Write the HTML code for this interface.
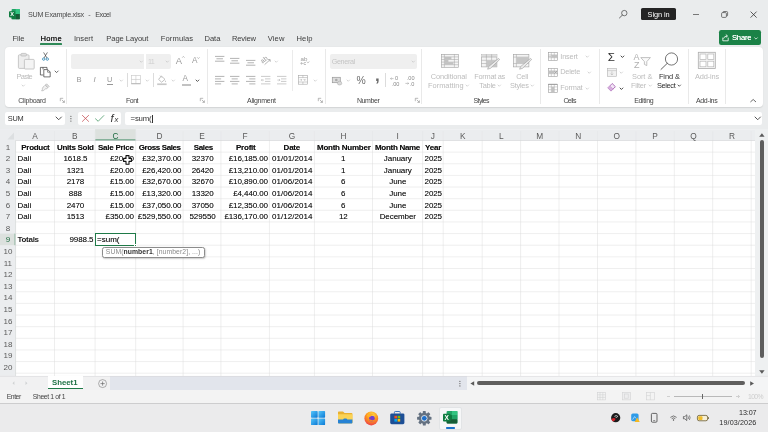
<!DOCTYPE html>
<html><head><meta charset="utf-8"><title>SUM Example.xlsx - Excel</title>
<style>
html,body{margin:0;padding:0;}
body{width:768px;height:432px;overflow:hidden;position:relative;background:#eaeced;font-family:"Liberation Sans",sans-serif;}
.t{position:absolute;white-space:nowrap;}
.c{text-shadow:0 0 0.5px rgba(0,0,0,0.45);}
#w{position:absolute;left:0;top:0;width:768px;height:432px;will-change:transform;}
.b{position:absolute;box-sizing:border-box;}
svg{overflow:visible;}
</style></head><body><div id="w">
<svg class="b" style="left:9.00px;top:9.20px;" width="11" height="10.4" viewBox="0 0 11 10.4">
<rect x="2.6" y="0" width="8.2" height="10.2" rx="0.9" fill="#21a366"/>
<rect x="6.7" y="0" width="4.1" height="5.1" fill="#33c481"/>
<rect x="2.6" y="5.1" width="4.1" height="5.1" fill="#107c41"/>
<rect x="6.7" y="5.1" width="4.1" height="5.1" rx="0.5" fill="#185c37"/>
<rect x="0" y="2.2" width="6.2" height="6.2" rx="0.8" fill="#107c41"/>
<text x="3.1" y="7.3" font-size="5.6" font-weight="bold" fill="#fff" text-anchor="middle" font-family="Liberation Sans, sans-serif">X</text>
</svg>
<span class="t" style="left:28.00px;top:10.32px;font-size:7.2px;line-height:9.36px;color:#4a4a4a;letter-spacing:-0.276px;">SUM Example.xlsx</span>
<span class="t" style="left:88.30px;top:10.32px;font-size:7.2px;line-height:9.36px;color:#555;">-</span>
<span class="t" style="left:95.30px;top:10.32px;font-size:7.2px;line-height:9.36px;color:#444;letter-spacing:-0.521px;">Excel</span>
<svg class="b" style="left:618.00px;top:9.00px;" width="12" height="12" viewBox="0 0 12 12"><circle cx="6.3" cy="4.1" r="2.7" fill="none" stroke="#444" stroke-width="0.7"/><path d="M4.4 6.1 L1.5 8.9" stroke="#444" stroke-width="0.8" stroke-linecap="round"/></svg>
<div class="b" style="left:641.00px;top:8.30px;width:34.70px;height:11.90px;background:#242424;border-radius:1.6px;"></div>
<span class="t" style="left:647.60px;top:9.99px;font-size:7.4px;line-height:9.62px;color:#fff;letter-spacing:-0.104px;">Sign in</span>
<div class="b" style="left:693.00px;top:13.70px;width:6.30px;height:0.60px;background:#777;"></div>
<svg class="b" style="left:721.00px;top:11.00px;" width="8" height="8" viewBox="0 0 8 8"><rect x="0.6" y="1.6" width="4.8" height="4.8" rx="1" fill="none" stroke="#444" stroke-width="0.7"/><path d="M2 1.6 V1.3 Q2 0.5 2.8 0.5 H5.6 Q6.6 0.5 6.6 1.5 V4.2 Q6.6 5 5.8 5 H5.5" fill="none" stroke="#444" stroke-width="0.7"/></svg>
<svg class="b" style="left:750.00px;top:11.00px;" width="8" height="8" viewBox="0 0 8 8"><path d="M0.6 0.6 L6.6 6.6 M6.6 0.6 L0.6 6.6" stroke="#333" stroke-width="0.8" fill="none"/></svg>
<span class="t" style="left:12.50px;top:34.06px;font-size:7.6px;line-height:9.88px;color:#3c3c3c;letter-spacing:-0.062px;">File</span>
<span class="t" style="left:40.50px;top:34.06px;font-size:7.6px;line-height:9.88px;color:#1f1f1f;letter-spacing:0.307px;text-shadow:0 0 0.2px #1f1f1f;">Home</span>
<span class="t" style="left:74.00px;top:34.06px;font-size:7.6px;line-height:9.88px;color:#3c3c3c;letter-spacing:-0.001px;">Insert</span>
<span class="t" style="left:106.30px;top:34.06px;font-size:7.6px;line-height:9.88px;color:#3c3c3c;letter-spacing:-0.062px;">Page Layout</span>
<span class="t" style="left:160.80px;top:34.06px;font-size:7.6px;line-height:9.88px;color:#3c3c3c;letter-spacing:0.103px;">Formulas</span>
<span class="t" style="left:204.50px;top:34.06px;font-size:7.6px;line-height:9.88px;color:#3c3c3c;letter-spacing:-0.063px;">Data</span>
<span class="t" style="left:232.00px;top:34.06px;font-size:7.6px;line-height:9.88px;color:#3c3c3c;letter-spacing:-0.187px;">Review</span>
<span class="t" style="left:267.80px;top:34.06px;font-size:7.6px;line-height:9.88px;color:#3c3c3c;letter-spacing:0.091px;">View</span>
<span class="t" style="left:296.50px;top:34.06px;font-size:7.6px;line-height:9.88px;color:#3c3c3c;letter-spacing:0.092px;">Help</span>
<div class="b" style="left:40.20px;top:43.30px;width:22.20px;height:1.30px;background:#2f8a58;border-radius:0.6px;"></div>
<div class="b" style="left:718.80px;top:30.20px;width:42.20px;height:14.60px;background:#1b8247;border-radius:2.2px;"></div>
<svg class="b" style="left:722.00px;top:33.60px;" width="8" height="8" viewBox="0 0 8 8"><path d="M0.8 3.6 V6.8 H6.2 V3.6" fill="none" stroke="#fff" stroke-width="0.8"/><path d="M1.6 4.6 Q2.2 2 5 2 M3.8 0.6 L5.6 2 L3.8 3.5" fill="none" stroke="#fff" stroke-width="0.8"/></svg>
<span class="t" style="left:732.00px;top:32.96px;font-size:7.6px;line-height:9.88px;color:#fff;letter-spacing:-0.196px;text-shadow:0 0 0.4px #fff;">Share</span>
<svg class="b" style="left:754.30px;top:36.80px;" width="4" height="3" viewBox="0 0 4 3"><path d="M0.4 0.5 L2 2.1 L3.6 0.5" fill="none" stroke="#fff" stroke-width="0.7"/></svg>
<div class="b" style="left:4.60px;top:47.40px;width:758.40px;height:59.30px;background:#ffffff;border-radius:4px;box-shadow:0 0.5px 1.2px rgba(0,0,0,0.10);"></div>
<svg class="b" style="left:17.60px;top:53.00px;" width="17" height="17" viewBox="0 0 17 17">
<rect x="0.4" y="1.8" width="10.6" height="13.6" rx="1" fill="#eeeeee" stroke="#bcbcbc" stroke-width="0.8"/>
<rect x="3" y="0.4" width="5.4" height="2.6" rx="0.8" fill="#e0e0e0" stroke="#bcbcbc" stroke-width="0.8"/>
<rect x="6.4" y="6.4" width="9.8" height="9.6" rx="0.8" fill="#f4f4f4" stroke="#bcbcbc" stroke-width="0.8"/>
</svg>
<span class="t" style="left:16.50px;top:72.49px;font-size:7.4px;line-height:9.62px;color:#bcbcbc;letter-spacing:-0.685px;">Paste</span>
<svg class="b" style="left:22.42px;top:85.16px;" width="2.5600000000000005" height="1.2800000000000002" viewBox="0 0 2.5600000000000005 1.2800000000000002"><path d="M0 0 L1.28 1.28 L2.56 0" fill="none" stroke="#c4c4c4" stroke-width="0.7" stroke-linecap="round" stroke-linejoin="round"/></svg>
<svg class="b" style="left:42.00px;top:52.20px;" width="7" height="9" viewBox="0 0 7 9"><path d="M1.6 0.4 L5 6 M5.4 0.4 L2 6" stroke="#444" stroke-width="0.7" fill="none"/>
<circle cx="1.7" cy="7.1" r="1.2" fill="none" stroke="#2c84b3" stroke-width="0.8"/><circle cx="5.3" cy="7.1" r="1.2" fill="none" stroke="#2c84b3" stroke-width="0.8"/></svg>
<svg class="b" style="left:40.00px;top:67.00px;" width="11" height="10.4" viewBox="0 0 11 10.4"><path d="M3 2.4 V0.4 H7 V2.4" fill="none" stroke="#444" stroke-width="0.75"/><path d="M0.4 0.4 H3 M0.4 0.4 V8 H3.4" fill="none" stroke="#444" stroke-width="0.75"/>
<path d="M3.8 2.6 H7.8 L10.2 5 V9.9 H3.8 Z" fill="#fff" stroke="#444" stroke-width="0.75"/><path d="M7.6 2.8 V5.2 H10" fill="none" stroke="#444" stroke-width="0.6"/></svg>
<svg class="b" style="left:54.80px;top:71.40px;" width="3.2" height="1.6" viewBox="0 0 3.2 1.6"><path d="M0 0 L1.60 1.60 L3.20 0" fill="none" stroke="#444" stroke-width="0.8" stroke-linecap="round" stroke-linejoin="round"/></svg>
<svg class="b" style="left:41.00px;top:83.00px;" width="9" height="9" viewBox="0 0 9 9"><path d="M5.6 0.8 L8.2 3.4 L7 4.6 L4.4 2 Z" fill="#e2e2e2" stroke="#a9a9a9" stroke-width="0.6" stroke-linejoin="round"/><path d="M4.2 2.2 L6.8 4.8 L5.8 5.8 Q4.6 5.4 3.6 6.6 Q2.4 8.2 0.6 7.8 Q1.6 6.6 1.4 5.4 Q1.6 4 3.2 3.2 Z" fill="#f0f0f0" stroke="#a9a9a9" stroke-width="0.6" stroke-linejoin="round"/></svg>
<span class="t" style="left:18.30px;top:96.15px;font-size:7.0px;line-height:9.1px;color:#444;letter-spacing:-0.296px;">Clipboard</span>
<svg class="b" style="left:59.60px;top:98.20px;" width="5" height="5" viewBox="0 0 5 5"><path d="M0.3 3.2 V0.3 H3.2" fill="none" stroke="#8a8a8a" stroke-width="0.6"/><path d="M1.8 1.8 L4.3 4.3 M4.4 2.4 V4.4 H2.4" fill="none" stroke="#8a8a8a" stroke-width="0.6"/></svg>
<div class="b" style="left:66.20px;top:49.00px;width:0.60px;height:55.00px;background:#e9e9e9;"></div>
<div class="b" style="left:70.90px;top:54.00px;width:73.50px;height:14.50px;background:#efefef;border-radius:2px 0 0 2px;"></div>
<svg class="b" style="left:139.72px;top:60.76px;" width="2.5600000000000005" height="1.2800000000000002" viewBox="0 0 2.5600000000000005 1.2800000000000002"><path d="M0 0 L1.28 1.28 L2.56 0" fill="none" stroke="#c4c4c4" stroke-width="0.7" stroke-linecap="round" stroke-linejoin="round"/></svg>
<div class="b" style="left:145.60px;top:54.00px;width:25.20px;height:14.50px;background:#efefef;border-radius:0 2px 2px 0;"></div>
<span class="t" style="left:147.90px;top:56.62px;font-size:7.2px;line-height:9.36px;color:#cfcfcf;letter-spacing:-0.537px;">11</span>
<svg class="b" style="left:166.32px;top:60.76px;" width="2.5600000000000005" height="1.2800000000000002" viewBox="0 0 2.5600000000000005 1.2800000000000002"><path d="M0 0 L1.28 1.28 L2.56 0" fill="none" stroke="#c4c4c4" stroke-width="0.7" stroke-linecap="round" stroke-linejoin="round"/></svg>
<span class="t" style="left:175.70px;top:54.69px;font-size:9.4px;line-height:12.22px;color:#9a9a9a;">A</span>
<svg class="b" style="left:181.60px;top:56.40px;" width="3" height="2" viewBox="0 0 3 2"><path d="M0.2 1.7 L1.4 0.4 L2.6 1.7" fill="none" stroke="#9a9a9a" stroke-width="0.6"/></svg>
<span class="t" style="left:192.00px;top:56.07px;font-size:8.2px;line-height:10.66px;color:#9a9a9a;">A</span>
<svg class="b" style="left:197.40px;top:56.60px;" width="3" height="2" viewBox="0 0 3 2"><path d="M0.2 0.3 L1.4 1.6 L2.6 0.3" fill="none" stroke="#9a9a9a" stroke-width="0.6"/></svg>
<span class="t" style="left:76.60px;top:75.06px;font-size:7.6px;line-height:9.88px;color:#979797;">B</span>
<span class="t" style="left:93.60px;top:74.93px;font-size:7.8px;line-height:10.14px;color:#979797;font-style:italic;font-family:"Liberation Serif",serif;">I</span>
<span class="t" style="left:107.00px;top:74.99px;font-size:7.4px;line-height:9.62px;color:#979797;">U</span>
<div class="b" style="left:106.80px;top:83.70px;width:5.80px;height:0.70px;background:#979797;"></div>
<svg class="b" style="left:120.02px;top:79.76px;" width="2.5600000000000005" height="1.2800000000000002" viewBox="0 0 2.5600000000000005 1.2800000000000002"><path d="M0 0 L1.28 1.28 L2.56 0" fill="none" stroke="#c4c4c4" stroke-width="0.7" stroke-linecap="round" stroke-linejoin="round"/></svg>
<div class="b" style="left:127.20px;top:73.00px;width:0.60px;height:14.00px;background:#dcdcdc;"></div>
<svg class="b" style="left:131.00px;top:75.30px;" width="10" height="9.4" viewBox="0 0 10 9.4"><rect x="0.4" y="0.4" width="9" height="8.2" fill="none" stroke="#c6c6c6" stroke-width="0.6"/><path d="M4.9 0.4 V8.6 M0.4 4.5 H9.4" stroke="#c6c6c6" stroke-width="0.6"/><path d="M0.2 8.8 H9.6" stroke="#a9a9a9" stroke-width="0.8"/></svg>
<svg class="b" style="left:146.02px;top:79.76px;" width="2.5600000000000005" height="1.2800000000000002" viewBox="0 0 2.5600000000000005 1.2800000000000002"><path d="M0 0 L1.28 1.28 L2.56 0" fill="none" stroke="#c4c4c4" stroke-width="0.7" stroke-linecap="round" stroke-linejoin="round"/></svg>
<div class="b" style="left:153.20px;top:73.00px;width:0.60px;height:14.00px;background:#dcdcdc;"></div>
<svg class="b" style="left:157.00px;top:75.00px;" width="10" height="11" viewBox="0 0 10 11"><path d="M4.4 1 L8 4.4 L4.6 7.2 L1.6 4.4 Z" fill="none" stroke="#a8a8a8" stroke-width="0.7"/><path d="M3 0.6 L5 2.6" stroke="#a8a8a8" stroke-width="0.6"/><path d="M8.4 5.2 Q9.4 6.6 8.6 7.2 Q7.8 6.8 8.4 5.2" fill="#a8a8a8"/><rect x="0.2" y="8.4" width="9.4" height="1.7" fill="#c8c8c8"/></svg>
<svg class="b" style="left:171.72px;top:79.76px;" width="2.5600000000000005" height="1.2800000000000002" viewBox="0 0 2.5600000000000005 1.2800000000000002"><path d="M0 0 L1.28 1.28 L2.56 0" fill="none" stroke="#c4c4c4" stroke-width="0.7" stroke-linecap="round" stroke-linejoin="round"/></svg>
<span class="t" style="left:182.60px;top:73.87px;font-size:8.2px;line-height:10.66px;color:#9a9a9a;">A</span>
<div class="b" style="left:181.60px;top:83.50px;width:9.40px;height:2.00px;background:#c2c2c2;"></div>
<svg class="b" style="left:196.16px;top:79.68px;" width="2.8800000000000003" height="1.4400000000000002" viewBox="0 0 2.8800000000000003 1.4400000000000002"><path d="M0 0 L1.44 1.44 L2.88 0" fill="none" stroke="#444" stroke-width="0.9" stroke-linecap="round" stroke-linejoin="round"/></svg>
<span class="t" style="left:126.00px;top:96.15px;font-size:7.0px;line-height:9.1px;color:#444;letter-spacing:-0.502px;">Font</span>
<svg class="b" style="left:200.00px;top:98.20px;" width="5" height="5" viewBox="0 0 5 5"><path d="M0.3 3.2 V0.3 H3.2" fill="none" stroke="#8a8a8a" stroke-width="0.6"/><path d="M1.8 1.8 L4.3 4.3 M4.4 2.4 V4.4 H2.4" fill="none" stroke="#8a8a8a" stroke-width="0.6"/></svg>
<div class="b" style="left:206.90px;top:49.00px;width:0.60px;height:55.00px;background:#e9e9e9;"></div>
<svg class="b" style="left:214.60px;top:56.40px;" width="9.4" height="7.199999999999999" viewBox="0 0 9.4 7.199999999999999"><path d="M0.00 0.40 H9.40" stroke="#999" stroke-width="0.75"/><path d="M1.41 2.80 H7.99" stroke="#999" stroke-width="0.75"/><path d="M0.00 5.20 H9.40" stroke="#999" stroke-width="0.75"/></svg>
<svg class="b" style="left:230.00px;top:58.20px;" width="9.4" height="7.199999999999999" viewBox="0 0 9.4 7.199999999999999"><path d="M0.00 0.40 H9.40" stroke="#999" stroke-width="0.75"/><path d="M1.41 2.80 H7.99" stroke="#999" stroke-width="0.75"/><path d="M0.00 5.20 H9.40" stroke="#999" stroke-width="0.75"/></svg>
<svg class="b" style="left:245.80px;top:60.40px;" width="9.4" height="7.199999999999999" viewBox="0 0 9.4 7.199999999999999"><path d="M0.00 0.40 H9.40" stroke="#999" stroke-width="0.75"/><path d="M1.41 2.80 H7.99" stroke="#999" stroke-width="0.75"/><path d="M0.00 5.20 H9.40" stroke="#999" stroke-width="0.75"/></svg>
<svg class="b" style="left:261.00px;top:56.00px;" width="10" height="9" viewBox="0 0 10 9"><text x="0.2" y="6.2" font-size="6.6" fill="#999" transform="rotate(-40 3 5)" font-family="Liberation Sans, sans-serif">ab</text><path d="M3.6 8.6 L9 3.8 M9.2 5.8 V3.6 H7" fill="none" stroke="#999" stroke-width="0.7"/></svg>
<svg class="b" style="left:274.72px;top:60.76px;" width="2.5600000000000005" height="1.2800000000000002" viewBox="0 0 2.5600000000000005 1.2800000000000002"><path d="M0 0 L1.28 1.28 L2.56 0" fill="none" stroke="#c4c4c4" stroke-width="0.7" stroke-linecap="round" stroke-linejoin="round"/></svg>
<svg class="b" style="left:214.60px;top:76.20px;" width="9.4" height="10.0" viewBox="0 0 9.4 10.0"><path d="M0.00 0.40 H9.40" stroke="#999" stroke-width="0.75"/><path d="M0.00 2.90 H6.11" stroke="#999" stroke-width="0.75"/><path d="M0.00 5.40 H9.40" stroke="#999" stroke-width="0.75"/><path d="M0.00 7.90 H6.11" stroke="#999" stroke-width="0.75"/></svg>
<svg class="b" style="left:230.00px;top:76.20px;" width="9.4" height="10.0" viewBox="0 0 9.4 10.0"><path d="M0.00 0.40 H9.40" stroke="#999" stroke-width="0.75"/><path d="M1.65 2.90 H7.76" stroke="#999" stroke-width="0.75"/><path d="M0.00 5.40 H9.40" stroke="#999" stroke-width="0.75"/><path d="M1.65 7.90 H7.76" stroke="#999" stroke-width="0.75"/></svg>
<svg class="b" style="left:245.60px;top:76.20px;" width="9.4" height="10.0" viewBox="0 0 9.4 10.0"><path d="M0.00 0.40 H9.40" stroke="#999" stroke-width="0.75"/><path d="M3.29 2.90 H9.40" stroke="#999" stroke-width="0.75"/><path d="M0.00 5.40 H9.40" stroke="#999" stroke-width="0.75"/><path d="M3.29 7.90 H9.40" stroke="#999" stroke-width="0.75"/></svg>
<svg class="b" style="left:261.00px;top:76.00px;" width="9.6" height="8.6" viewBox="0 0 9.6 8.6"><path d="M0 0.4 H9.4 M4 2.9 H9.4 M4 5.4 H9.4 M0 7.9 H9.4" stroke="#a6a6a6" stroke-width="0.6"/><path d="M3 4.1 H0.4 M1.4 3 L0.3 4.1 L1.4 5.2" fill="none" stroke="#a6a6a6" stroke-width="0.5"/></svg>
<svg class="b" style="left:277.00px;top:76.00px;" width="9.6" height="8.6" viewBox="0 0 9.6 8.6"><path d="M0 0.4 H9.4 M4 2.9 H9.4 M4 5.4 H9.4 M0 7.9 H9.4" stroke="#a6a6a6" stroke-width="0.6"/><path d="M0.3 4.1 H3 M1.9 3 L3 4.1 L1.9 5.2" fill="none" stroke="#a6a6a6" stroke-width="0.5"/></svg>
<div class="b" style="left:292.30px;top:50.00px;width:0.60px;height:41.00px;background:#ebebeb;"></div>
<svg class="b" style="left:299.60px;top:56.40px;" width="10" height="10" viewBox="0 0 10 10"><text x="0.6" y="4.6" font-size="6.2" fill="#999" font-family="Liberation Sans, sans-serif">ab</text><path d="M3.4 7.4 H0.8 M1.9 6.3 L0.7 7.4 L1.9 8.5 M6.8 5.6 Q7.6 8 9.4 5.6" fill="none" stroke="#999" stroke-width="0.6"/><text x="3.6" y="9.4" font-size="5.4" fill="#999" font-family="Liberation Sans, sans-serif">c</text></svg>
<svg class="b" style="left:298.40px;top:75.30px;" width="10" height="9.8" viewBox="0 0 10 9.8"><rect x="0.4" y="0.4" width="9" height="8.8" fill="none" stroke="#a6a6a6" stroke-width="0.6"/><path d="M0.4 2.6 H9.4 M0.4 7 H9.4 M4.9 0.4 V2.6 M4.9 7 V9.2" stroke="#a6a6a6" stroke-width="0.55"/><path d="M1.6 4.8 H4 M5.8 4.8 H8.2 M3.2 4 L4 4.8 L3.2 5.6 M6.6 4 L5.8 4.8 L6.6 5.6" fill="none" stroke="#a6a6a6" stroke-width="0.5"/></svg>
<svg class="b" style="left:313.62px;top:79.76px;" width="2.5600000000000005" height="1.2800000000000002" viewBox="0 0 2.5600000000000005 1.2800000000000002"><path d="M0 0 L1.28 1.28 L2.56 0" fill="none" stroke="#c4c4c4" stroke-width="0.7" stroke-linecap="round" stroke-linejoin="round"/></svg>
<span class="t" style="left:247.00px;top:96.15px;font-size:7.0px;line-height:9.1px;color:#444;letter-spacing:-0.270px;">Alignment</span>
<svg class="b" style="left:318.00px;top:98.20px;" width="5" height="5" viewBox="0 0 5 5"><path d="M0.3 3.2 V0.3 H3.2" fill="none" stroke="#8a8a8a" stroke-width="0.6"/><path d="M1.8 1.8 L4.3 4.3 M4.4 2.4 V4.4 H2.4" fill="none" stroke="#8a8a8a" stroke-width="0.6"/></svg>
<div class="b" style="left:324.70px;top:49.00px;width:0.60px;height:55.00px;background:#e9e9e9;"></div>
<div class="b" style="left:329.70px;top:54.00px;width:87.30px;height:14.50px;background:#efefef;border-radius:2px;"></div>
<span class="t" style="left:331.70px;top:56.62px;font-size:7.2px;line-height:9.36px;color:#c4c4c4;letter-spacing:-0.331px;">General</span>
<svg class="b" style="left:412.32px;top:60.76px;" width="2.5600000000000005" height="1.2800000000000002" viewBox="0 0 2.5600000000000005 1.2800000000000002"><path d="M0 0 L1.28 1.28 L2.56 0" fill="none" stroke="#c4c4c4" stroke-width="0.7" stroke-linecap="round" stroke-linejoin="round"/></svg>
<svg class="b" style="left:332.00px;top:77.00px;" width="10.4" height="8.4" viewBox="0 0 10.4 8.4"><rect x="0.3" y="0.3" width="8" height="5.4" fill="#dcdcdc" stroke="#999" stroke-width="0.7"/><circle cx="4.3" cy="3" r="1.3" fill="#aaa"/><path d="M5.4 6.4 Q5.4 4.2 7.6 4.2 Q9.8 4.2 9.8 6.4 Q9.8 8 7.6 8 Q5.4 8 5.4 6.4" fill="#d9d9d9" stroke="#a6a6a6" stroke-width="0.5"/></svg>
<svg class="b" style="left:347.02px;top:79.76px;" width="2.5600000000000005" height="1.2800000000000002" viewBox="0 0 2.5600000000000005 1.2800000000000002"><path d="M0 0 L1.28 1.28 L2.56 0" fill="none" stroke="#c4c4c4" stroke-width="0.7" stroke-linecap="round" stroke-linejoin="round"/></svg>
<span class="t" style="left:356.60px;top:73.64px;font-size:10.4px;line-height:13.52px;color:#6e6e6e;">%</span>
<span class="t" style="left:375.00px;top:64.55px;font-size:17px;line-height:22.1px;color:#6a6a6a;font-weight:bold;font-family:"Liberation Serif",serif;">,</span>
<div class="b" style="left:385.20px;top:73.00px;width:0.60px;height:14.00px;background:#dcdcdc;"></div>
<svg class="b" style="left:390.00px;top:75.60px;" width="10" height="9.6" viewBox="0 0 10 9.6"><text x="5" y="4.4" font-size="5.6" fill="#8a8a8a" font-family="Liberation Sans, sans-serif">0</text><text x="1.6" y="9.6" font-size="5.6" fill="#8a8a8a" font-family="Liberation Sans, sans-serif">.00</text><path d="M3.6 2.6 H0.6 M1.6 1.6 L0.5 2.6 L1.6 3.6" fill="none" stroke="#8e8e8e" stroke-width="0.5"/></svg>
<svg class="b" style="left:405.40px;top:75.60px;" width="10" height="9.6" viewBox="0 0 10 9.6"><text x="1.8" y="4.4" font-size="5.6" fill="#8a8a8a" font-family="Liberation Sans, sans-serif">.00</text><text x="4.8" y="9.6" font-size="5.6" fill="#8a8a8a" font-family="Liberation Sans, sans-serif">.0</text><path d="M0.4 7.4 H3.6 M2.6 6.4 L3.7 7.4 L2.6 8.4" fill="none" stroke="#8e8e8e" stroke-width="0.5"/></svg>
<span class="t" style="left:356.90px;top:96.15px;font-size:7.0px;line-height:9.1px;color:#444;letter-spacing:-0.399px;">Number</span>
<svg class="b" style="left:415.00px;top:98.20px;" width="5" height="5" viewBox="0 0 5 5"><path d="M0.3 3.2 V0.3 H3.2" fill="none" stroke="#8a8a8a" stroke-width="0.6"/><path d="M1.8 1.8 L4.3 4.3 M4.4 2.4 V4.4 H2.4" fill="none" stroke="#8a8a8a" stroke-width="0.6"/></svg>
<div class="b" style="left:421.20px;top:49.00px;width:0.60px;height:55.00px;background:#e9e9e9;"></div>
<svg class="b" style="left:440.60px;top:53.50px;" width="17.6" height="13.8" viewBox="0 0 17.6 13.8"><rect x="0.3" y="0.3" width="17" height="13" fill="#f4f4f4" stroke="#a0a0a0" stroke-width="0.6"/><path d="M0.3 2.9 H17.3 M0.3 5.5 H17.3 M0.3 8.1 H17.3 M0.3 10.7 H17.3 M3.4 0.3 V13.3 M13.4 0.3 V13.3" stroke="#a0a0a0" stroke-width="0.5"/><rect x="3.4" y="2.9" width="7" height="2.6" fill="#c2c2c2"/><rect x="3.4" y="5.5" width="4" height="2.6" fill="#c2c2c2"/><rect x="3.4" y="8.1" width="9" height="2.6" fill="#c2c2c2"/></svg>
<span class="t" style="left:430.70px;top:71.59px;font-size:7.4px;line-height:9.62px;color:#bcbcbc;letter-spacing:-0.066px;">Conditional</span>
<span class="t" style="left:428.00px;top:80.79px;font-size:7.4px;line-height:9.62px;color:#bcbcbc;letter-spacing:0.023px;">Formatting</span>
<svg class="b" style="left:466.12px;top:85.36px;" width="2.5600000000000005" height="1.2800000000000002" viewBox="0 0 2.5600000000000005 1.2800000000000002"><path d="M0 0 L1.28 1.28 L2.56 0" fill="none" stroke="#c4c4c4" stroke-width="0.7" stroke-linecap="round" stroke-linejoin="round"/></svg>
<svg class="b" style="left:481.00px;top:53.50px;" width="19" height="16" viewBox="0 0 19 16"><rect x="0.3" y="0.3" width="15.6" height="12.6" fill="#f4f4f4" stroke="#a0a0a0" stroke-width="0.6"/><rect x="0.3" y="0.3" width="15.6" height="2.8" fill="#dedede"/><path d="M0.3 3.1 H15.9 M0.3 6.3 H15.9 M0.3 9.5 H15.9 M5.4 0.3 V12.9 M10.6 0.3 V12.9" stroke="#a0a0a0" stroke-width="0.5"/><rect x="5.4" y="6.3" width="10.5" height="6.6" fill="#c6c6c6"/><path d="M17.6 4.4 L18.6 5.6 L9.4 14.4 L6.6 15.2 L7.6 12.6 Z" fill="#ececec" stroke="#9c9c9c" stroke-width="0.6"/></svg>
<span class="t" style="left:474.30px;top:71.59px;font-size:7.4px;line-height:9.62px;color:#bcbcbc;letter-spacing:-0.290px;">Format as</span>
<span class="t" style="left:479.30px;top:80.79px;font-size:7.4px;line-height:9.62px;color:#bcbcbc;letter-spacing:-0.278px;">Table</span>
<svg class="b" style="left:497.72px;top:85.36px;" width="2.5600000000000005" height="1.2800000000000002" viewBox="0 0 2.5600000000000005 1.2800000000000002"><path d="M0 0 L1.28 1.28 L2.56 0" fill="none" stroke="#c4c4c4" stroke-width="0.7" stroke-linecap="round" stroke-linejoin="round"/></svg>
<svg class="b" style="left:513.00px;top:53.50px;" width="19" height="16" viewBox="0 0 19 16"><rect x="0.3" y="0.3" width="15.6" height="12.6" fill="#f4f4f4" stroke="#a0a0a0" stroke-width="0.6"/><path d="M0.3 3.1 H15.9 M0.3 9.5 H15.9 M3.4 0.3 V12.9" stroke="#a0a0a0" stroke-width="0.5"/><rect x="3.4" y="3.1" width="12.5" height="6.4" fill="#c6c6c6"/><path d="M17.6 4.4 L18.6 5.6 L9.4 14.4 L6.6 15.2 L7.6 12.6 Z" fill="#ececec" stroke="#9c9c9c" stroke-width="0.6"/></svg>
<span class="t" style="left:516.30px;top:71.59px;font-size:7.4px;line-height:9.62px;color:#bcbcbc;letter-spacing:-0.262px;">Cell</span>
<span class="t" style="left:510.00px;top:80.79px;font-size:7.4px;line-height:9.62px;color:#bcbcbc;letter-spacing:-0.259px;">Styles</span>
<svg class="b" style="left:530.72px;top:85.36px;" width="2.5600000000000005" height="1.2800000000000002" viewBox="0 0 2.5600000000000005 1.2800000000000002"><path d="M0 0 L1.28 1.28 L2.56 0" fill="none" stroke="#c4c4c4" stroke-width="0.7" stroke-linecap="round" stroke-linejoin="round"/></svg>
<span class="t" style="left:473.50px;top:96.15px;font-size:7.0px;line-height:9.1px;color:#444;letter-spacing:-0.594px;">Styles</span>
<div class="b" style="left:540.20px;top:49.00px;width:0.60px;height:55.00px;background:#e9e9e9;"></div>
<svg class="b" style="left:548.00px;top:52.30px;" width="9.6" height="8.6" viewBox="0 0 9.6 8.6"><rect x="0.3" y="0.3" width="9" height="8" fill="none" stroke="#9a9a9a" stroke-width="0.6"/><path d="M0.3 2.9 H9.3 M0.3 5.7 H9.3 M3.3 0.3 V8.3 M6.3 0.3 V8.3" stroke="#a6a6a6" stroke-width="0.5"/><rect x="3.3" y="2.9" width="6" height="2.8" fill="#c2c2c2"/><path d="M0.3 4.3 H3" stroke="#9a9a9a" stroke-width="0.6"/></svg>
<span class="t" style="left:560.30px;top:51.69px;font-size:7.4px;line-height:9.62px;color:#bcbcbc;letter-spacing:-0.218px;">Insert</span>
<svg class="b" style="left:585.52px;top:56.36px;" width="2.5600000000000005" height="1.2800000000000002" viewBox="0 0 2.5600000000000005 1.2800000000000002"><path d="M0 0 L1.28 1.28 L2.56 0" fill="none" stroke="#c4c4c4" stroke-width="0.7" stroke-linecap="round" stroke-linejoin="round"/></svg>
<svg class="b" style="left:548.00px;top:67.80px;" width="9.6" height="8.6" viewBox="0 0 9.6 8.6"><rect x="0.3" y="0.3" width="9" height="8" fill="none" stroke="#9a9a9a" stroke-width="0.6"/><path d="M0.3 2.9 H9.3 M0.3 5.7 H9.3 M3.3 0.3 V8.3 M6.3 0.3 V8.3" stroke="#a6a6a6" stroke-width="0.5"/><rect x="0.3" y="2.9" width="6" height="2.8" fill="#c2c2c2"/><path d="M6.6 3 L9 5.6 M9 3 L6.6 5.6" stroke="#8a8a8a" stroke-width="0.7"/></svg>
<span class="t" style="left:560.30px;top:67.49px;font-size:7.4px;line-height:9.62px;color:#bcbcbc;letter-spacing:-0.282px;">Delete</span>
<svg class="b" style="left:587.72px;top:72.16px;" width="2.5600000000000005" height="1.2800000000000002" viewBox="0 0 2.5600000000000005 1.2800000000000002"><path d="M0 0 L1.28 1.28 L2.56 0" fill="none" stroke="#c4c4c4" stroke-width="0.7" stroke-linecap="round" stroke-linejoin="round"/></svg>
<svg class="b" style="left:548.00px;top:83.90px;" width="9.6" height="8.6" viewBox="0 0 9.6 8.6"><rect x="0.3" y="0.3" width="9" height="8" fill="none" stroke="#9a9a9a" stroke-width="0.6"/><path d="M0.3 2.9 H9.3 M0.3 5.7 H9.3 M3.3 0.3 V8.3 M6.3 0.3 V8.3" stroke="#a6a6a6" stroke-width="0.5"/><rect x="3.3" y="2.9" width="3" height="5.4" fill="#c2c2c2"/><path d="M0.3 0.3 H9.3" stroke="#9a9a9a" stroke-width="0.9"/></svg>
<span class="t" style="left:560.30px;top:83.49px;font-size:7.4px;line-height:9.62px;color:#bcbcbc;letter-spacing:-0.206px;">Format</span>
<svg class="b" style="left:585.52px;top:88.16px;" width="2.5600000000000005" height="1.2800000000000002" viewBox="0 0 2.5600000000000005 1.2800000000000002"><path d="M0 0 L1.28 1.28 L2.56 0" fill="none" stroke="#c4c4c4" stroke-width="0.7" stroke-linecap="round" stroke-linejoin="round"/></svg>
<span class="t" style="left:563.40px;top:96.15px;font-size:7.0px;line-height:9.1px;color:#444;letter-spacing:-0.592px;">Cells</span>
<div class="b" style="left:599.10px;top:49.00px;width:0.60px;height:55.00px;background:#e9e9e9;"></div>
<span class="t" style="left:607.80px;top:48.86px;font-size:11.6px;line-height:15.08px;color:#2e2e2e;">Σ</span>
<svg class="b" style="left:621.36px;top:56.28px;" width="2.8800000000000003" height="1.4400000000000002" viewBox="0 0 2.8800000000000003 1.4400000000000002"><path d="M0 0 L1.44 1.44 L2.88 0" fill="none" stroke="#333" stroke-width="0.9" stroke-linecap="round" stroke-linejoin="round"/></svg>
<svg class="b" style="left:606.70px;top:67.70px;" width="10" height="8.8" viewBox="0 0 10 8.8"><rect x="0.3" y="0.3" width="9.2" height="8" fill="#f1f1f1" stroke="#b4b4b4" stroke-width="0.6"/><path d="M0.3 2.6 H9.5" stroke="#b4b4b4" stroke-width="0.5"/><path d="M4.9 3.4 V7 M3.5 5.6 L4.9 7 L6.3 5.6" fill="none" stroke="#b4b4b4" stroke-width="0.6"/></svg>
<svg class="b" style="left:620.42px;top:72.16px;" width="2.5600000000000005" height="1.2800000000000002" viewBox="0 0 2.5600000000000005 1.2800000000000002"><path d="M0 0 L1.28 1.28 L2.56 0" fill="none" stroke="#c4c4c4" stroke-width="0.7" stroke-linecap="round" stroke-linejoin="round"/></svg>
<svg class="b" style="left:607.30px;top:83.20px;" width="9" height="9" viewBox="0 0 9 9"><path d="M5.2 0.5 L8.4 3.7 L4 8.1 L0.8 4.9 Z" fill="#f3e6f6" stroke="#8e3a9d" stroke-width="0.7"/><path d="M2.6 3.1 L5.8 6.3" stroke="#8e3a9d" stroke-width="0.7"/><path d="M0.8 4.9 L2.6 3.1 L5.8 6.3 L4 8.1 Z" fill="#d6aede"/></svg>
<svg class="b" style="left:620.26px;top:88.08px;" width="2.8800000000000003" height="1.4400000000000002" viewBox="0 0 2.8800000000000003 1.4400000000000002"><path d="M0 0 L1.44 1.44 L2.88 0" fill="none" stroke="#333" stroke-width="0.9" stroke-linecap="round" stroke-linejoin="round"/></svg>
<svg class="b" style="left:633.50px;top:52.60px;" width="17" height="16" viewBox="0 0 17 16"><text x="-0.4" y="6.8" font-size="9" fill="#b0b0b0" font-family="Liberation Sans, sans-serif">A</text><text x="0" y="15.4" font-size="9" fill="#b0b0b0" font-family="Liberation Sans, sans-serif">Z</text><path d="M6.8 4.6 H16.4 L12.8 8.6 V12.6 L10.4 11.4 V8.6 Z" fill="#fafafa" stroke="#a9a9a9" stroke-width="0.7"/></svg>
<span class="t" style="left:632.00px;top:71.59px;font-size:7.4px;line-height:9.62px;color:#bcbcbc;letter-spacing:-0.044px;">Sort &amp;</span>
<span class="t" style="left:630.90px;top:80.79px;font-size:7.4px;line-height:9.62px;color:#bcbcbc;letter-spacing:-0.224px;">Filter</span>
<svg class="b" style="left:648.72px;top:85.36px;" width="2.5600000000000005" height="1.2800000000000002" viewBox="0 0 2.5600000000000005 1.2800000000000002"><path d="M0 0 L1.28 1.28 L2.56 0" fill="none" stroke="#c4c4c4" stroke-width="0.7" stroke-linecap="round" stroke-linejoin="round"/></svg>
<svg class="b" style="left:660.00px;top:51.60px;" width="18" height="18" viewBox="0 0 18 18"><circle cx="11.5" cy="7" r="6.1" fill="none" stroke="#3a3a3a" stroke-width="0.7"/><path d="M7.2 11.4 L1 17.4" stroke="#3a3a3a" stroke-width="0.8" stroke-linecap="round"/></svg>
<span class="t" style="left:658.90px;top:71.59px;font-size:7.4px;line-height:9.62px;color:#2b2b2b;letter-spacing:-0.048px;">Find &amp;</span>
<span class="t" style="left:657.00px;top:80.79px;font-size:7.4px;line-height:9.62px;color:#2b2b2b;letter-spacing:-0.361px;">Select</span>
<svg class="b" style="left:678.12px;top:85.36px;" width="2.5600000000000005" height="1.2800000000000002" viewBox="0 0 2.5600000000000005 1.2800000000000002"><path d="M0 0 L1.28 1.28 L2.56 0" fill="none" stroke="#333" stroke-width="0.8" stroke-linecap="round" stroke-linejoin="round"/></svg>
<span class="t" style="left:634.20px;top:96.15px;font-size:7.0px;line-height:9.1px;color:#444;letter-spacing:-0.329px;">Editing</span>
<div class="b" style="left:688.10px;top:49.00px;width:0.60px;height:55.00px;background:#e9e9e9;"></div>
<svg class="b" style="left:698.40px;top:52.00px;" width="18" height="17" viewBox="0 0 18 17"><rect x="0.3" y="0.3" width="17" height="16.2" fill="#f7f7f7" stroke="#ababab" stroke-width="0.8"/><rect x="2" y="2" width="6" height="5.6" fill="#fff" stroke="#b4b4b4" stroke-width="0.7"/><rect x="9.8" y="2" width="6" height="5.6" fill="#fff" stroke="#b4b4b4" stroke-width="0.7"/><rect x="2" y="9.2" width="6" height="5.6" fill="#fff" stroke="#b4b4b4" stroke-width="0.7"/><rect x="9.8" y="9.2" width="6" height="5.6" fill="#fff" stroke="#b4b4b4" stroke-width="0.7"/></svg>
<span class="t" style="left:694.90px;top:71.59px;font-size:7.4px;line-height:9.62px;color:#bcbcbc;letter-spacing:-0.142px;">Add-ins</span>
<span class="t" style="left:696.00px;top:96.15px;font-size:7.0px;line-height:9.1px;color:#444;letter-spacing:-0.348px;">Add-ins</span>
<div class="b" style="left:725.00px;top:49.00px;width:0.60px;height:55.00px;background:#e9e9e9;"></div>
<svg class="b" style="left:749.80px;top:99.30px;" width="6.4" height="3.4" viewBox="0 0 6.4 3.4"><path d="M0.4 3 L3.2 0.5 L6 3" fill="none" stroke="#444" stroke-width="0.8"/></svg>
<div class="b" style="left:5.20px;top:112.00px;width:59.60px;height:13.00px;background:#fff;border-radius:2px;"></div>
<span class="t" style="left:7.80px;top:114.09px;font-size:7.4px;line-height:9.62px;color:#333;letter-spacing:-0.248px;">SUM</span>
<svg class="b" style="left:56.28px;top:117.44px;" width="5.44" height="2.72" viewBox="0 0 5.44 2.72"><path d="M0 0 L2.72 2.72 L5.44 0" fill="none" stroke="#4a4a4a" stroke-width="0.95" stroke-linecap="round" stroke-linejoin="round"/></svg>
<svg class="b" style="left:70.40px;top:115.00px;" width="2" height="8" viewBox="0 0 2 8"><circle cx="0.9" cy="1.3" r="0.6" fill="#5a5a5a"/><circle cx="0.9" cy="3.7" r="0.6" fill="#5a5a5a"/><circle cx="0.9" cy="6.1" r="0.6" fill="#5a5a5a"/></svg>
<div class="b" style="left:77.50px;top:112.00px;width:43.80px;height:13.00px;background:#fff;border-radius:2px;"></div>
<svg class="b" style="left:82.00px;top:115.40px;" width="7" height="7" viewBox="0 0 7 7"><path d="M0.4 0.4 L6.6 6.4 M6.6 0.4 L0.4 6.4" stroke="#c8555b" stroke-width="0.8" fill="none" stroke-linecap="round"/></svg>
<svg class="b" style="left:95.20px;top:115.40px;" width="9.2" height="7" viewBox="0 0 9.2 7"><path d="M0.5 3.8 L3.2 6.3 L8.8 0.6" stroke="#4a9a68" stroke-width="0.8" fill="none" stroke-linecap="round" stroke-linejoin="round"/></svg>
<span class="t" style="left:110.60px;top:111.05px;font-size:11px;line-height:14.3px;color:#333;font-style:italic;font-family:"Liberation Serif",serif;">f</span>
<span class="t" style="left:114.60px;top:115.26px;font-size:7.6px;line-height:9.88px;color:#333;font-style:italic;font-family:"Liberation Serif",serif;">x</span>
<div class="b" style="left:124.80px;top:112.00px;width:637.50px;height:13.00px;background:#fff;border-radius:2px;"></div>
<span class="t" style="left:130.60px;top:113.83px;font-size:7.8px;line-height:10.14px;color:#333;letter-spacing:-0.218px;">=sum(</span>
<div class="b" style="left:151.90px;top:115.20px;width:0.60px;height:7.40px;background:#333;"></div>
<svg class="b" style="left:754.78px;top:117.04px;" width="5.44" height="2.72" viewBox="0 0 5.44 2.72"><path d="M0 0 L2.72 2.72 L5.44 0" fill="none" stroke="#4a4a4a" stroke-width="0.95" stroke-linecap="round" stroke-linejoin="round"/></svg>
<svg class="b" style="left:0.00px;top:0.00px;" width="768" height="432" viewBox="0 0 768 432"><rect x="0" y="129.2" width="755" height="247.0" fill="#fff"/><rect x="0" y="129.2" width="755" height="11.300000000000011" fill="#ebedef"/><rect x="0" y="129.2" width="15.6" height="247.0" fill="#ebedef"/><rect x="95.1" y="129.2" width="40.599999999999994" height="11.300000000000011" fill="#dce1de"/><rect x="95.1" y="139.4" width="40.599999999999994" height="1.3" fill="#4f9370"/><rect x="0" y="233.58" width="15.6" height="11.635" fill="#dce1de"/><rect x="14.5" y="233.58" width="0.9" height="11.635" fill="#86b39a"/><path d="M54.5 131.2 V140.5" stroke="#e2e4e6" stroke-width="0.5"/><path d="M95.1 131.2 V140.5" stroke="#e2e4e6" stroke-width="0.5"/><path d="M135.7 131.2 V140.5" stroke="#e2e4e6" stroke-width="0.5"/><path d="M183.1 131.2 V140.5" stroke="#e2e4e6" stroke-width="0.5"/><path d="M220.9 131.2 V140.5" stroke="#e2e4e6" stroke-width="0.5"/><path d="M269.4 131.2 V140.5" stroke="#e2e4e6" stroke-width="0.5"/><path d="M314.4 131.2 V140.5" stroke="#e2e4e6" stroke-width="0.5"/><path d="M372.5 131.2 V140.5" stroke="#e2e4e6" stroke-width="0.5"/><path d="M422.6 131.2 V140.5" stroke="#e2e4e6" stroke-width="0.5"/><path d="M443.2 131.2 V140.5" stroke="#e2e4e6" stroke-width="0.5"/><path d="M482.2 131.2 V140.5" stroke="#e2e4e6" stroke-width="0.5"/><path d="M520.6 131.2 V140.5" stroke="#e2e4e6" stroke-width="0.5"/><path d="M559.0 131.2 V140.5" stroke="#e2e4e6" stroke-width="0.5"/><path d="M597.5 131.2 V140.5" stroke="#e2e4e6" stroke-width="0.5"/><path d="M635.9 131.2 V140.5" stroke="#e2e4e6" stroke-width="0.5"/><path d="M674.3 131.2 V140.5" stroke="#e2e4e6" stroke-width="0.5"/><path d="M712.7 131.2 V140.5" stroke="#e2e4e6" stroke-width="0.5"/><path d="M751.2 131.2 V140.5" stroke="#e2e4e6" stroke-width="0.5"/><path d="M54.5 140.5 V376.2" stroke="#dcdcdc" stroke-width="0.5"/><path d="M95.1 140.5 V376.2" stroke="#dcdcdc" stroke-width="0.5"/><path d="M135.7 140.5 V376.2" stroke="#dcdcdc" stroke-width="0.5"/><path d="M183.1 140.5 V376.2" stroke="#dcdcdc" stroke-width="0.5"/><path d="M220.9 140.5 V376.2" stroke="#dcdcdc" stroke-width="0.5"/><path d="M269.4 140.5 V376.2" stroke="#dcdcdc" stroke-width="0.5"/><path d="M314.4 140.5 V376.2" stroke="#dcdcdc" stroke-width="0.5"/><path d="M372.5 140.5 V376.2" stroke="#dcdcdc" stroke-width="0.5"/><path d="M422.6 140.5 V376.2" stroke="#dcdcdc" stroke-width="0.5"/><path d="M443.2 140.5 V376.2" stroke="#dcdcdc" stroke-width="0.5"/><path d="M482.2 140.5 V376.2" stroke="#dcdcdc" stroke-width="0.5"/><path d="M520.6 140.5 V376.2" stroke="#dcdcdc" stroke-width="0.5"/><path d="M559.0 140.5 V376.2" stroke="#dcdcdc" stroke-width="0.5"/><path d="M597.5 140.5 V376.2" stroke="#dcdcdc" stroke-width="0.5"/><path d="M635.9 140.5 V376.2" stroke="#dcdcdc" stroke-width="0.5"/><path d="M674.3 140.5 V376.2" stroke="#dcdcdc" stroke-width="0.5"/><path d="M712.7 140.5 V376.2" stroke="#dcdcdc" stroke-width="0.5"/><path d="M751.2 140.5 V376.2" stroke="#dcdcdc" stroke-width="0.5"/><path d="M15.6 140.5 V376.2" stroke="#cfd1d2" stroke-width="0.6"/><path d="M15.6 152.13 H755" stroke="#dcdcdc" stroke-width="0.45"/><path d="M15.6 163.77 H755" stroke="#dcdcdc" stroke-width="0.45"/><path d="M15.6 175.41 H755" stroke="#dcdcdc" stroke-width="0.45"/><path d="M15.6 187.04 H755" stroke="#dcdcdc" stroke-width="0.45"/><path d="M15.6 198.68 H755" stroke="#dcdcdc" stroke-width="0.45"/><path d="M15.6 210.31 H755" stroke="#dcdcdc" stroke-width="0.45"/><path d="M15.6 221.94 H755" stroke="#dcdcdc" stroke-width="0.45"/><path d="M15.6 233.58 H755" stroke="#dcdcdc" stroke-width="0.45"/><path d="M15.6 245.22 H755" stroke="#dcdcdc" stroke-width="0.45"/><path d="M15.6 256.85 H755" stroke="#dcdcdc" stroke-width="0.45"/><path d="M15.6 268.49 H755" stroke="#dcdcdc" stroke-width="0.45"/><path d="M15.6 280.12 H755" stroke="#dcdcdc" stroke-width="0.45"/><path d="M15.6 291.75 H755" stroke="#dcdcdc" stroke-width="0.45"/><path d="M15.6 303.39 H755" stroke="#dcdcdc" stroke-width="0.45"/><path d="M15.6 315.02 H755" stroke="#dcdcdc" stroke-width="0.45"/><path d="M15.6 326.66 H755" stroke="#dcdcdc" stroke-width="0.45"/><path d="M15.6 338.29 H755" stroke="#dcdcdc" stroke-width="0.45"/><path d="M15.6 349.93 H755" stroke="#dcdcdc" stroke-width="0.45"/><path d="M15.6 361.56 H755" stroke="#dcdcdc" stroke-width="0.45"/><path d="M15.6 373.20 H755" stroke="#dcdcdc" stroke-width="0.45"/><path d="M15.6 140.5 H755" stroke="#d2d4d5" stroke-width="0.6"/><path d="M14 132.6 V139.4 H7.4 Z" fill="#dcdfe1"/></svg>
<span class="t" style="left:32.28px;top:130.80px;font-size:8.3px;line-height:10.79px;color:#5a5a5a;">A</span>
<span class="t" style="left:72.03px;top:130.80px;font-size:8.3px;line-height:10.79px;color:#5a5a5a;">B</span>
<span class="t" style="left:112.40px;top:130.80px;font-size:8.3px;line-height:10.79px;color:#1d6b41;">C</span>
<span class="t" style="left:156.40px;top:130.80px;font-size:8.3px;line-height:10.79px;color:#5a5a5a;">D</span>
<span class="t" style="left:199.23px;top:130.80px;font-size:8.3px;line-height:10.79px;color:#5a5a5a;">E</span>
<span class="t" style="left:242.61px;top:130.80px;font-size:8.3px;line-height:10.79px;color:#5a5a5a;">F</span>
<span class="t" style="left:288.67px;top:130.80px;font-size:8.3px;line-height:10.79px;color:#5a5a5a;">G</span>
<span class="t" style="left:340.45px;top:130.80px;font-size:8.3px;line-height:10.79px;color:#5a5a5a;">H</span>
<span class="t" style="left:396.40px;top:130.80px;font-size:8.3px;line-height:10.79px;color:#5a5a5a;">I</span>
<span class="t" style="left:430.82px;top:130.80px;font-size:8.3px;line-height:10.79px;color:#5a5a5a;">J</span>
<span class="t" style="left:459.93px;top:130.80px;font-size:8.3px;line-height:10.79px;color:#5a5a5a;">K</span>
<span class="t" style="left:499.09px;top:130.80px;font-size:8.3px;line-height:10.79px;color:#5a5a5a;">L</span>
<span class="t" style="left:536.34px;top:130.80px;font-size:8.3px;line-height:10.79px;color:#5a5a5a;">M</span>
<span class="t" style="left:575.25px;top:130.80px;font-size:8.3px;line-height:10.79px;color:#5a5a5a;">N</span>
<span class="t" style="left:613.47px;top:130.80px;font-size:8.3px;line-height:10.79px;color:#5a5a5a;">O</span>
<span class="t" style="left:652.33px;top:130.80px;font-size:8.3px;line-height:10.79px;color:#5a5a5a;">P</span>
<span class="t" style="left:690.27px;top:130.80px;font-size:8.3px;line-height:10.79px;color:#5a5a5a;">Q</span>
<span class="t" style="left:728.95px;top:130.80px;font-size:8.3px;line-height:10.79px;color:#5a5a5a;">R</span>
<span class="t" style="left:5.73px;top:142.90px;font-size:8.0px;line-height:10.4px;color:#5a5a5a;letter-spacing:-0.100px;">1</span>
<span class="t" style="left:5.73px;top:153.90px;font-size:8.0px;line-height:10.4px;color:#5a5a5a;letter-spacing:-0.100px;">2</span>
<span class="t" style="left:5.73px;top:165.90px;font-size:8.0px;line-height:10.4px;color:#5a5a5a;letter-spacing:-0.100px;">3</span>
<span class="t" style="left:5.73px;top:176.90px;font-size:8.0px;line-height:10.4px;color:#5a5a5a;letter-spacing:-0.100px;">4</span>
<span class="t" style="left:5.73px;top:188.90px;font-size:8.0px;line-height:10.4px;color:#5a5a5a;letter-spacing:-0.100px;">5</span>
<span class="t" style="left:5.73px;top:200.90px;font-size:8.0px;line-height:10.4px;color:#5a5a5a;letter-spacing:-0.100px;">6</span>
<span class="t" style="left:5.73px;top:211.90px;font-size:8.0px;line-height:10.4px;color:#5a5a5a;letter-spacing:-0.100px;">7</span>
<span class="t" style="left:5.73px;top:223.90px;font-size:8.0px;line-height:10.4px;color:#5a5a5a;letter-spacing:-0.100px;">8</span>
<span class="t" style="left:5.73px;top:234.90px;font-size:8.0px;line-height:10.4px;color:#1d6b41;letter-spacing:-0.100px;">9</span>
<span class="t" style="left:3.55px;top:246.90px;font-size:8.0px;line-height:10.4px;color:#5a5a5a;letter-spacing:-0.100px;">10</span>
<span class="t" style="left:3.85px;top:258.90px;font-size:8.0px;line-height:10.4px;color:#5a5a5a;letter-spacing:-0.100px;">11</span>
<span class="t" style="left:3.55px;top:269.90px;font-size:8.0px;line-height:10.4px;color:#5a5a5a;letter-spacing:-0.100px;">12</span>
<span class="t" style="left:3.55px;top:281.90px;font-size:8.0px;line-height:10.4px;color:#5a5a5a;letter-spacing:-0.100px;">13</span>
<span class="t" style="left:3.55px;top:292.90px;font-size:8.0px;line-height:10.4px;color:#5a5a5a;letter-spacing:-0.100px;">14</span>
<span class="t" style="left:3.55px;top:304.90px;font-size:8.0px;line-height:10.4px;color:#5a5a5a;letter-spacing:-0.100px;">15</span>
<span class="t" style="left:3.55px;top:316.90px;font-size:8.0px;line-height:10.4px;color:#5a5a5a;letter-spacing:-0.100px;">16</span>
<span class="t" style="left:3.55px;top:327.90px;font-size:8.0px;line-height:10.4px;color:#5a5a5a;letter-spacing:-0.100px;">17</span>
<span class="t" style="left:3.55px;top:339.90px;font-size:8.0px;line-height:10.4px;color:#5a5a5a;letter-spacing:-0.100px;">18</span>
<span class="t" style="left:3.55px;top:350.90px;font-size:8.0px;line-height:10.4px;color:#5a5a5a;letter-spacing:-0.100px;">19</span>
<span class="t" style="left:3.55px;top:362.90px;font-size:8.0px;line-height:10.4px;color:#5a5a5a;letter-spacing:-0.100px;">20</span>
<span class="t c" style="left:21.30px;top:142.90px;font-size:8.0px;line-height:10.4px;color:#111;font-weight:bold;letter-spacing:-0.289px;">Product</span>
<span class="t c" style="left:57.00px;top:142.90px;font-size:8.0px;line-height:10.4px;color:#111;font-weight:bold;letter-spacing:-0.285px;">Units Sold</span>
<span class="t c" style="left:98.00px;top:142.90px;font-size:8.0px;line-height:10.4px;color:#111;font-weight:bold;letter-spacing:-0.255px;">Sale Price</span>
<span class="t c" style="left:138.80px;top:142.90px;font-size:8.0px;line-height:10.4px;color:#111;font-weight:bold;letter-spacing:-0.405px;">Gross Sales</span>
<span class="t c" style="left:193.70px;top:142.90px;font-size:8.0px;line-height:10.4px;color:#111;font-weight:bold;letter-spacing:-0.321px;">Sales</span>
<span class="t c" style="left:236.00px;top:142.90px;font-size:8.0px;line-height:10.4px;color:#111;font-weight:bold;letter-spacing:-0.231px;">Profit</span>
<span class="t c" style="left:283.60px;top:142.90px;font-size:8.0px;line-height:10.4px;color:#111;font-weight:bold;letter-spacing:-0.235px;">Date</span>
<span class="t c" style="left:317.00px;top:142.90px;font-size:8.0px;line-height:10.4px;color:#111;font-weight:bold;letter-spacing:-0.245px;">Month Number</span>
<span class="t c" style="left:375.00px;top:142.90px;font-size:8.0px;line-height:10.4px;color:#111;font-weight:bold;letter-spacing:-0.300px;">Month Name</span>
<span class="t c" style="left:425.00px;top:142.90px;font-size:8.0px;line-height:10.4px;color:#111;font-weight:bold;letter-spacing:-0.152px;">Year</span>
<span class="t c" style="left:17.50px;top:153.90px;font-size:8.0px;line-height:10.4px;color:#161616;letter-spacing:0.005px;">Dali</span>
<span class="t c" style="left:63.41px;top:153.90px;font-size:8.0px;line-height:10.4px;color:#161616;letter-spacing:-0.080px;">1618.5</span>
<span class="t c" style="left:109.91px;top:153.90px;font-size:8.0px;line-height:10.4px;color:#161616;letter-spacing:-0.080px;">£20.00</span>
<span class="t c" style="left:142.16px;top:153.90px;font-size:8.0px;line-height:10.4px;color:#161616;letter-spacing:-0.080px;">£32,370.00</span>
<span class="t c" style="left:191.68px;top:153.90px;font-size:8.0px;line-height:10.4px;color:#161616;letter-spacing:-0.080px;">32370</span>
<span class="t c" style="left:228.76px;top:153.90px;font-size:8.0px;line-height:10.4px;color:#161616;letter-spacing:-0.080px;">£16,185.00</span>
<span class="t c" style="left:271.90px;top:153.90px;font-size:8.0px;line-height:10.4px;color:#161616;letter-spacing:0.056px;">01/01/2014</span>
<span class="t c" style="left:341.12px;top:153.90px;font-size:8.0px;line-height:10.4px;color:#161616;letter-spacing:-0.080px;">1</span>
<span class="t c" style="left:383.85px;top:153.90px;font-size:8.0px;line-height:10.4px;color:#161616;letter-spacing:-0.080px;">January</span>
<span class="t c" style="left:424.52px;top:153.90px;font-size:8.0px;line-height:10.4px;color:#161616;letter-spacing:-0.080px;">2025</span>
<span class="t c" style="left:17.50px;top:165.90px;font-size:8.0px;line-height:10.4px;color:#161616;letter-spacing:0.005px;">Dali</span>
<span class="t c" style="left:66.66px;top:165.90px;font-size:8.0px;line-height:10.4px;color:#161616;letter-spacing:-0.080px;">1321</span>
<span class="t c" style="left:109.91px;top:165.90px;font-size:8.0px;line-height:10.4px;color:#161616;letter-spacing:-0.080px;">£20.00</span>
<span class="t c" style="left:142.16px;top:165.90px;font-size:8.0px;line-height:10.4px;color:#161616;letter-spacing:-0.080px;">£26,420.00</span>
<span class="t c" style="left:191.68px;top:165.90px;font-size:8.0px;line-height:10.4px;color:#161616;letter-spacing:-0.080px;">26420</span>
<span class="t c" style="left:228.76px;top:165.90px;font-size:8.0px;line-height:10.4px;color:#161616;letter-spacing:-0.080px;">£13,210.00</span>
<span class="t c" style="left:271.90px;top:165.90px;font-size:8.0px;line-height:10.4px;color:#161616;letter-spacing:0.056px;">01/01/2014</span>
<span class="t c" style="left:341.12px;top:165.90px;font-size:8.0px;line-height:10.4px;color:#161616;letter-spacing:-0.080px;">1</span>
<span class="t c" style="left:383.85px;top:165.90px;font-size:8.0px;line-height:10.4px;color:#161616;letter-spacing:-0.080px;">January</span>
<span class="t c" style="left:424.52px;top:165.90px;font-size:8.0px;line-height:10.4px;color:#161616;letter-spacing:-0.080px;">2025</span>
<span class="t c" style="left:17.50px;top:176.90px;font-size:8.0px;line-height:10.4px;color:#161616;letter-spacing:0.005px;">Dali</span>
<span class="t c" style="left:66.66px;top:176.90px;font-size:8.0px;line-height:10.4px;color:#161616;letter-spacing:-0.080px;">2178</span>
<span class="t c" style="left:109.91px;top:176.90px;font-size:8.0px;line-height:10.4px;color:#161616;letter-spacing:-0.080px;">£15.00</span>
<span class="t c" style="left:142.16px;top:176.90px;font-size:8.0px;line-height:10.4px;color:#161616;letter-spacing:-0.080px;">£32,670.00</span>
<span class="t c" style="left:191.68px;top:176.90px;font-size:8.0px;line-height:10.4px;color:#161616;letter-spacing:-0.080px;">32670</span>
<span class="t c" style="left:228.76px;top:176.90px;font-size:8.0px;line-height:10.4px;color:#161616;letter-spacing:-0.080px;">£10,890.00</span>
<span class="t c" style="left:271.90px;top:176.90px;font-size:8.0px;line-height:10.4px;color:#161616;letter-spacing:0.056px;">01/06/2014</span>
<span class="t c" style="left:341.12px;top:176.90px;font-size:8.0px;line-height:10.4px;color:#161616;letter-spacing:-0.080px;">6</span>
<span class="t c" style="left:389.29px;top:176.90px;font-size:8.0px;line-height:10.4px;color:#161616;letter-spacing:-0.080px;">June</span>
<span class="t c" style="left:424.52px;top:176.90px;font-size:8.0px;line-height:10.4px;color:#161616;letter-spacing:-0.080px;">2025</span>
<span class="t c" style="left:17.50px;top:188.90px;font-size:8.0px;line-height:10.4px;color:#161616;letter-spacing:0.005px;">Dali</span>
<span class="t c" style="left:68.85px;top:188.90px;font-size:8.0px;line-height:10.4px;color:#161616;letter-spacing:-0.080px;">888</span>
<span class="t c" style="left:109.91px;top:188.90px;font-size:8.0px;line-height:10.4px;color:#161616;letter-spacing:-0.080px;">£15.00</span>
<span class="t c" style="left:142.16px;top:188.90px;font-size:8.0px;line-height:10.4px;color:#161616;letter-spacing:-0.080px;">£13,320.00</span>
<span class="t c" style="left:191.68px;top:188.90px;font-size:8.0px;line-height:10.4px;color:#161616;letter-spacing:-0.080px;">13320</span>
<span class="t c" style="left:233.13px;top:188.90px;font-size:8.0px;line-height:10.4px;color:#161616;letter-spacing:-0.080px;">£4,440.00</span>
<span class="t c" style="left:271.90px;top:188.90px;font-size:8.0px;line-height:10.4px;color:#161616;letter-spacing:0.056px;">01/06/2014</span>
<span class="t c" style="left:341.12px;top:188.90px;font-size:8.0px;line-height:10.4px;color:#161616;letter-spacing:-0.080px;">6</span>
<span class="t c" style="left:389.29px;top:188.90px;font-size:8.0px;line-height:10.4px;color:#161616;letter-spacing:-0.080px;">June</span>
<span class="t c" style="left:424.52px;top:188.90px;font-size:8.0px;line-height:10.4px;color:#161616;letter-spacing:-0.080px;">2025</span>
<span class="t c" style="left:17.50px;top:200.90px;font-size:8.0px;line-height:10.4px;color:#161616;letter-spacing:0.005px;">Dali</span>
<span class="t c" style="left:66.66px;top:200.90px;font-size:8.0px;line-height:10.4px;color:#161616;letter-spacing:-0.080px;">2470</span>
<span class="t c" style="left:109.91px;top:200.90px;font-size:8.0px;line-height:10.4px;color:#161616;letter-spacing:-0.080px;">£15.00</span>
<span class="t c" style="left:142.16px;top:200.90px;font-size:8.0px;line-height:10.4px;color:#161616;letter-spacing:-0.080px;">£37,050.00</span>
<span class="t c" style="left:191.68px;top:200.90px;font-size:8.0px;line-height:10.4px;color:#161616;letter-spacing:-0.080px;">37050</span>
<span class="t c" style="left:228.76px;top:200.90px;font-size:8.0px;line-height:10.4px;color:#161616;letter-spacing:-0.080px;">£12,350.00</span>
<span class="t c" style="left:271.90px;top:200.90px;font-size:8.0px;line-height:10.4px;color:#161616;letter-spacing:0.056px;">01/06/2014</span>
<span class="t c" style="left:341.12px;top:200.90px;font-size:8.0px;line-height:10.4px;color:#161616;letter-spacing:-0.080px;">6</span>
<span class="t c" style="left:389.29px;top:200.90px;font-size:8.0px;line-height:10.4px;color:#161616;letter-spacing:-0.080px;">June</span>
<span class="t c" style="left:424.52px;top:200.90px;font-size:8.0px;line-height:10.4px;color:#161616;letter-spacing:-0.080px;">2025</span>
<span class="t c" style="left:17.50px;top:211.90px;font-size:8.0px;line-height:10.4px;color:#161616;letter-spacing:0.005px;">Dali</span>
<span class="t c" style="left:66.66px;top:211.90px;font-size:8.0px;line-height:10.4px;color:#161616;letter-spacing:-0.080px;">1513</span>
<span class="t c" style="left:105.54px;top:211.90px;font-size:8.0px;line-height:10.4px;color:#161616;letter-spacing:-0.080px;">£350.00</span>
<span class="t c" style="left:137.79px;top:211.90px;font-size:8.0px;line-height:10.4px;color:#161616;letter-spacing:-0.080px;">£529,550.00</span>
<span class="t c" style="left:189.49px;top:211.90px;font-size:8.0px;line-height:10.4px;color:#161616;letter-spacing:-0.080px;">529550</span>
<span class="t c" style="left:224.39px;top:211.90px;font-size:8.0px;line-height:10.4px;color:#161616;letter-spacing:-0.080px;">£136,170.00</span>
<span class="t c" style="left:271.90px;top:211.90px;font-size:8.0px;line-height:10.4px;color:#161616;letter-spacing:0.056px;">01/12/2014</span>
<span class="t c" style="left:338.93px;top:211.90px;font-size:8.0px;line-height:10.4px;color:#161616;letter-spacing:-0.080px;">12</span>
<span class="t c" style="left:379.67px;top:211.90px;font-size:8.0px;line-height:10.4px;color:#161616;letter-spacing:-0.080px;">December</span>
<span class="t c" style="left:424.52px;top:211.90px;font-size:8.0px;line-height:10.4px;color:#161616;letter-spacing:-0.080px;">2025</span>
<span class="t" style="left:17.40px;top:234.90px;font-size:8.0px;line-height:10.4px;color:#1e1e1e;font-weight:bold;letter-spacing:-0.261px;">Totals</span>
<span class="t c" style="left:69.41px;top:234.90px;font-size:8.0px;line-height:10.4px;color:#161616;letter-spacing:-0.080px;">9988.5</span>
<div class="b" style="left:94.60px;top:233.18px;width:41.60px;height:12.63px;background:#fff;border:1.1px solid #1f7a48;"></div>
<span class="t c" style="left:97.00px;top:234.90px;font-size:8.0px;line-height:10.4px;color:#161616;letter-spacing:0.010px;">=sum(</span>
<div class="b" style="left:134.40px;top:244.21px;width:2.40px;height:2.40px;background:#1f7a48;border:0.5px solid #fff;"></div>
<div class="b" style="left:101.60px;top:246.50px;width:103.00px;height:11.70px;background:#fff;border:0.7px solid #8c8c8c;border-radius:2.4px;box-shadow:0.6px 0.8px 1.6px rgba(0,0,0,0.25);"></div>
<span class="t" style="left:105.8px;top:248.10px;font-size:6.8px;line-height:8.8px;color:#8a8a8a;letter-spacing:0.086px;">SUM(<b style="color:#333">number1</b>, [number2], ...)</span>
<svg class="b" style="left:123.20px;top:155.20px;" width="9" height="10" viewBox="0 0 9 10"><path d="M3 0.6 H6 V3.4 H8.4 V6.4 H6 V9.2 H3 V6.4 H0.6 V3.4 H3 Z" fill="#fff" stroke="#111" stroke-width="1.1" stroke-linejoin="round"/></svg>
<div class="b" style="left:755.00px;top:129.20px;width:13.00px;height:247.00px;background:#eef0f1;"></div>
<svg class="b" style="left:759.20px;top:132.80px;" width="5.8" height="4" viewBox="0 0 5.8 4"><path d="M0.2 3.8 L2.9 0.3 L5.6 3.8 Z" fill="#5a5a5a"/></svg>
<div class="b" style="left:760.00px;top:140.40px;width:4.40px;height:217.20px;background:#5d5d5d;border-radius:2.2px;"></div>
<svg class="b" style="left:759.20px;top:370.40px;" width="5.8" height="4" viewBox="0 0 5.8 4"><path d="M0.2 0.2 L2.9 3.7 L5.6 0.2 Z" fill="#5a5a5a"/></svg>
<div class="b" style="left:0.00px;top:376.20px;width:768.00px;height:13.60px;background:#f1f1f2;"></div>
<div class="b" style="left:110.00px;top:376.20px;width:356.50px;height:13.60px;background:#e2e5ec;"></div>
<div class="b" style="left:466.50px;top:376.20px;width:301.50px;height:13.60px;background:#f4f5f6;"></div>
<svg class="b" style="left:0.00px;top:376.00px;" width="768" height="1" viewBox="0 0 768 1"><path d="M0 0.4 H768" stroke="#d4d4d6" stroke-width="0.5"/></svg>
<svg class="b" style="left:11.60px;top:380.60px;" width="3" height="4.4" viewBox="0 0 3 4.4"><path d="M2.4 0.3 L0.5 2.2 L2.4 4.1 Z" fill="#cfd1d3"/></svg>
<svg class="b" style="left:25.00px;top:380.60px;" width="3" height="4.4" viewBox="0 0 3 4.4"><path d="M0.5 0.3 L2.4 2.2 L0.5 4.1 Z" fill="#cfd1d3"/></svg>
<div class="b" style="left:47.50px;top:376.20px;width:35.00px;height:12.80px;background:#fff;border-radius:0 0 1px 1px;"></div>
<div class="b" style="left:47.50px;top:387.50px;width:35.00px;height:1.30px;background:#1f7a48;"></div>
<span class="t" style="left:52.00px;top:377.83px;font-size:7.8px;line-height:10.14px;color:#1e7145;font-weight:bold;letter-spacing:-0.013px;">Sheet1</span>
<svg class="b" style="left:97.60px;top:378.80px;" width="9.2" height="9.2" viewBox="0 0 9.2 9.2"><circle cx="4.6" cy="4.6" r="4.0" fill="none" stroke="#707070" stroke-width="0.55"/><path d="M4.6 2.5 V6.7 M2.5 4.6 H6.7" stroke="#606060" stroke-width="0.65"/></svg>
<svg class="b" style="left:459.20px;top:379.80px;" width="2" height="8" viewBox="0 0 2 8"><circle cx="0.9" cy="1.3" r="0.6" fill="#5a5a5a"/><circle cx="0.9" cy="3.6" r="0.6" fill="#5a5a5a"/><circle cx="0.9" cy="5.9" r="0.6" fill="#5a5a5a"/></svg>
<svg class="b" style="left:469.60px;top:380.60px;" width="4.4" height="5" viewBox="0 0 4.4 5"><path d="M4.2 0.2 L0.4 2.5 L4.2 4.8 Z" fill="#5a5a5a"/></svg>
<div class="b" style="left:477.20px;top:380.50px;width:268.30px;height:4.70px;background:#5f5f5f;border-radius:2.3px;"></div>
<svg class="b" style="left:749.80px;top:380.60px;" width="4.4" height="5" viewBox="0 0 4.4 5"><path d="M0.2 0.2 L4 2.5 L0.2 4.8 Z" fill="#5a5a5a"/></svg>
<div class="b" style="left:0.00px;top:389.80px;width:768.00px;height:13.40px;background:#f3f3f3;"></div>
<span class="t" style="left:6.70px;top:392.98px;font-size:6.8px;line-height:8.84px;color:#444;letter-spacing:-0.431px;">Enter</span>
<span class="t" style="left:32.80px;top:392.98px;font-size:6.8px;line-height:8.84px;color:#444;letter-spacing:-0.348px;">Sheet 1 of 1</span>
<svg class="b" style="left:597.20px;top:392.00px;" width="9" height="8.4" viewBox="0 0 9 8.4"><rect x="0.3" y="0.3" width="8.2" height="7.6" fill="none" stroke="#d2d3d4" stroke-width="0.6"/><path d="M0.3 2.8 H8.5 M0.3 5.4 H8.5 M3 0.3 V7.9 M5.8 0.3 V7.9" stroke="#d2d3d4" stroke-width="0.6"/></svg>
<svg class="b" style="left:621.50px;top:392.00px;" width="9" height="8.4" viewBox="0 0 9 8.4"><rect x="0.3" y="0.3" width="8.2" height="7.6" fill="#ededee" stroke="#d2d3d4" stroke-width="0.6"/><rect x="2.6" y="2" width="3.6" height="4.2" fill="none" stroke="#d2d3d4" stroke-width="0.6"/></svg>
<svg class="b" style="left:645.50px;top:392.00px;" width="9" height="8.4" viewBox="0 0 9 8.4"><rect x="0.3" y="0.3" width="8.2" height="7.6" fill="none" stroke="#d2d3d4" stroke-width="0.6"/><path d="M0.3 3.6 H4.4 V0.3 M4.4 3.6 V7.9" fill="none" stroke="#d2d3d4" stroke-width="0.6"/></svg>
<div class="b" style="left:666.50px;top:396.20px;width:3.30px;height:0.60px;background:#d0d0d0;"></div>
<div class="b" style="left:673.50px;top:396.20px;width:58.80px;height:0.60px;background:#b9b9b9;"></div>
<div class="b" style="left:702.40px;top:394.20px;width:0.80px;height:4.60px;background:#666;"></div>
<div class="b" style="left:736.00px;top:396.20px;width:3.80px;height:0.60px;background:#d0d0d0;"></div>
<div class="b" style="left:737.60px;top:394.60px;width:0.60px;height:3.80px;background:#d0d0d0;"></div>
<span class="t" style="left:748.00px;top:392.78px;font-size:6.8px;line-height:8.84px;color:#cdcdcd;letter-spacing:-0.598px;">100%</span>
<div class="b" style="left:0.00px;top:403.20px;width:768.00px;height:28.80px;background:#ebebec;border-top:0.7px solid #cdcdce;"></div>
<svg class="b" style="left:310.50px;top:410.50px;" width="14.2" height="14.2" viewBox="0 0 14.2 14.2"><defs><linearGradient id="wg" x1="0" y1="0" x2="1" y2="1"><stop offset="0" stop-color="#57c7fb"/><stop offset="1" stop-color="#0a78d4"/></linearGradient></defs>
<rect x="0" y="0" width="6.7" height="6.7" rx="0.7" fill="url(#wg)"/><rect x="7.4" y="0" width="6.7" height="6.7" rx="0.7" fill="url(#wg)"/><rect x="0" y="7.4" width="6.7" height="6.7" rx="0.7" fill="url(#wg)"/><rect x="7.4" y="7.4" width="6.7" height="6.7" rx="0.7" fill="url(#wg)"/></svg>
<svg class="b" style="left:337.50px;top:411.40px;" width="14.6" height="12.8" viewBox="0 0 14.6 12.8"><path d="M0.8 0.4 H5 L6.6 2 H13.6 Q14.4 2 14.4 2.8 V11.6 H0 V1.2 Q0 0.4 0.8 0.4 Z" fill="#eab130"/>
<path d="M0 3.2 H14.4 V11.8 Q14.4 12.6 13.6 12.6 H0.8 Q0 12.6 0 11.8 Z" fill="#fbd355"/>
<path d="M0 8.6 H4.6 Q5.2 8.6 5.4 8 Q5.6 7.4 6.2 7.4 H8.2 Q8.8 7.4 9 8 Q9.2 8.6 9.8 8.6 H14.4 V11.8 Q14.4 12.6 13.6 12.6 H0.8 Q0 12.6 0 11.8 Z" fill="#2682d4"/></svg>
<svg class="b" style="left:364.20px;top:410.80px;" width="14.6" height="14.6" viewBox="0 0 14.6 14.6"><defs><radialGradient id="fg" cx="0.55" cy="0.25" r="0.85"><stop offset="0" stop-color="#ffe14d"/><stop offset="0.45" stop-color="#ff9a1c"/><stop offset="1" stop-color="#e62a55"/></radialGradient></defs>
<circle cx="7.3" cy="7.5" r="6.9" fill="url(#fg)"/><circle cx="7.9" cy="7.6" r="2.9" fill="#7640cc"/><path d="M2.6 4.4 Q5.6 1.4 9.8 3.4 Q7 3.8 6.4 5.8 Q3.8 5.8 2.6 4.4Z" fill="#ffb128"/><path d="M5 7.6 Q5.4 10.4 8.4 10.6 Q11 10.4 11.4 7.8 Q10.4 9.4 8.2 9.2 Q6 9 5 7.6Z" fill="#ff8a1f"/></svg>
<svg class="b" style="left:390.00px;top:411.40px;" width="14.6" height="13.4" viewBox="0 0 14.6 13.4"><path d="M4.4 2.6 V1.4 Q4.4 0.5 5.3 0.5 H9.3 Q10.2 0.5 10.2 1.4 V2.6" fill="none" stroke="#2a66b8" stroke-width="0.9"/>
<rect x="0.2" y="2.4" width="14.2" height="10.8" rx="1.4" fill="#1d4f96"/>
<rect x="4.4" y="4.8" width="2.6" height="2.6" fill="#f25022"/><rect x="7.6" y="4.8" width="2.6" height="2.6" fill="#7fba00"/><rect x="4.4" y="8" width="2.6" height="2.6" fill="#00a4ef"/><rect x="7.6" y="8" width="2.6" height="2.6" fill="#ffb900"/></svg>
<svg class="b" style="left:417.00px;top:410.80px;" width="14.6" height="14.6" viewBox="0 0 14.6 14.6"><g transform="translate(7.3 7.3)"><rect x="-1.5" y="-7.2" width="3" height="3.2" rx="0.6" fill="#647181" transform="rotate(0)"/><rect x="-1.5" y="-7.2" width="3" height="3.2" rx="0.6" fill="#647181" transform="rotate(45)"/><rect x="-1.5" y="-7.2" width="3" height="3.2" rx="0.6" fill="#647181" transform="rotate(90)"/><rect x="-1.5" y="-7.2" width="3" height="3.2" rx="0.6" fill="#647181" transform="rotate(135)"/><rect x="-1.5" y="-7.2" width="3" height="3.2" rx="0.6" fill="#647181" transform="rotate(180)"/><rect x="-1.5" y="-7.2" width="3" height="3.2" rx="0.6" fill="#647181" transform="rotate(225)"/><rect x="-1.5" y="-7.2" width="3" height="3.2" rx="0.6" fill="#647181" transform="rotate(270)"/><rect x="-1.5" y="-7.2" width="3" height="3.2" rx="0.6" fill="#647181" transform="rotate(315)"/><circle r="5.5" fill="#647181"/><circle r="3.1" fill="#e9edf2"/><circle r="2.4" fill="#1f6fc9"/></g></svg>
<div class="b" style="left:439.00px;top:406.60px;width:23.40px;height:23.20px;background:#f6f7f8;border-radius:2px;border:0.5px solid #e2e4e6;"></div>
<svg class="b" style="left:443.00px;top:411.00px;" width="14.6" height="12.6" viewBox="0 0 14.6 12.6">
<rect x="3.6" y="0" width="10.8" height="12.4" rx="1.1" fill="#21a366"/>
<rect x="9" y="0" width="5.4" height="4.1" fill="#33c481"/><rect x="3.6" y="4.1" width="5.4" height="4.2" fill="#107c41"/><rect x="9" y="4.1" width="5.4" height="4.2" fill="#21a366"/>
<rect x="3.6" y="8.3" width="10.8" height="4.1" rx="0.6" fill="#185c37"/>
<rect x="0" y="2.8" width="7.6" height="7.6" rx="0.9" fill="#107c41"/>
<text x="3.8" y="9" font-size="6.6" font-weight="bold" fill="#fff" text-anchor="middle" font-family="Liberation Sans, sans-serif">X</text></svg>
<div class="b" style="left:446.20px;top:427.20px;width:8.80px;height:1.60px;background:#1a73c9;border-radius:0.8px;"></div>
<svg class="b" style="left:611.00px;top:412.80px;" width="9.4" height="9.4" viewBox="0 0 9.4 9.4"><circle cx="4.7" cy="4.7" r="4.6" fill="#1c1c1c"/><path d="M0.6 6.2 Q2.4 4 4.6 5.8 Q4 8.8 1.8 8.2 Q0.8 7.6 0.6 6.2Z" fill="#d4222a"/><path d="M3.4 3.4 Q5.4 1.6 6.8 3.4 Q5.6 5 4.6 4.2" fill="none" stroke="#fff" stroke-width="0.7"/></svg>
<svg class="b" style="left:631.00px;top:413.00px;" width="9" height="9.4" viewBox="0 0 9 9.4"><rect x="0.2" y="0.4" width="7.4" height="7.8" rx="1.6" fill="#2f9be8"/><path d="M1.6 6.6 L3.6 3.6 L5 5.4" fill="none" stroke="#cfe9ff" stroke-width="0.7"/><path d="M6.2 4.4 L8.8 9 H3.6 Z" fill="#f5b921"/></svg>
<svg class="b" style="left:651.00px;top:412.50px;" width="6.4" height="9.6" viewBox="0 0 6.4 9.6"><rect x="0.4" y="0.4" width="5.6" height="8.8" rx="1" fill="none" stroke="#444" stroke-width="0.8"/><path d="M2.2 7.6 H4.2" stroke="#444" stroke-width="0.6"/></svg>
<svg class="b" style="left:669.60px;top:414.80px;" width="7" height="6" viewBox="0 0 7 6"><path d="M0.4 2.4 Q3.5 -0.6 6.6 2.4" fill="none" stroke="#444" stroke-width="0.7"/><path d="M1.7 3.7 Q3.5 2 5.3 3.7" fill="none" stroke="#444" stroke-width="0.7"/><circle cx="3.5" cy="5" r="0.7" fill="#444"/></svg>
<svg class="b" style="left:682.60px;top:414.00px;" width="8.6" height="7.4" viewBox="0 0 8.6 7.4"><path d="M0.4 2.6 H1.8 L3.8 0.8 V6.6 L1.8 4.8 H0.4 Z" fill="none" stroke="#444" stroke-width="0.7" stroke-linejoin="round"/><path d="M5.2 2.4 Q6 3.7 5.2 5 M6.4 1.4 Q7.8 3.7 6.4 6" fill="none" stroke="#444" stroke-width="0.6"/></svg>
<svg class="b" style="left:697.20px;top:414.60px;" width="12" height="6.2" viewBox="0 0 12 6.2"><rect x="0.4" y="0.4" width="10.2" height="5.4" rx="1.7" fill="#f6efd6" stroke="#6a5a2c" stroke-width="0.8"/><rect x="1.3" y="1.3" width="4.2" height="3.6" rx="0.9" fill="#f0bd2a"/><rect x="11" y="2.1" width="0.8" height="2" rx="0.3" fill="#6a5a2c"/></svg>
<span class="t" style="left:739.00px;top:407.92px;font-size:7.2px;line-height:9.36px;color:#2a2a2a;letter-spacing:-0.104px;">13:07</span>
<span class="t" style="left:719.30px;top:417.72px;font-size:7.2px;line-height:9.36px;color:#2a2a2a;letter-spacing:0.116px;">19/03/2026</span>
</div></body></html>
